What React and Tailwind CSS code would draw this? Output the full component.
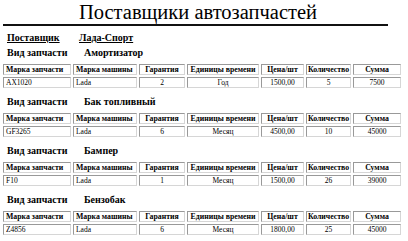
const parts = [
  { kind: "Амортизатор", code: "AX1020", car: "Lada", warranty: "2", unit: "Год", price: "1500,00", qty: "5", sum: "7500" },
  { kind: "Бак топливный", code: "GF3265", car: "Lada", warranty: "6", unit: "Месяц", price: "4500,00", qty: "10", sum: "45000" },
  { kind: "Бампер", code: "F10", car: "Lada", warranty: "1", unit: "Месяц", price: "1500,00", qty: "26", sum: "39000" },
  { kind: "Бензобак", code: "Z4856", car: "Lada", warranty: "6", unit: "Месяц", price: "1800,00", qty: "25", sum: "45000" },
];

const cols = ["Марка запчасти", "Марка машины", "Гарантия", "Единицы времени", "Цена/шт", "Количество", "Сумма"];

const cell = "h-[11px] flex items-center px-[2px] border border-t-[#999] border-l-[#999] border-b-[#d6d6d6] border-r-[#d6d6d6] leading-none whitespace-nowrap overflow-hidden";

function PartTable({ p }) {
  const values = [p.code, p.car, p.warranty, p.unit, p.price, p.qty, p.sum];
  return (
    <div className="grid grid-cols-[68px_64px_46px_72px_43px_45px_48px] gap-[2px] ml-[3px] text-[7.5px]">
      {cols.map((c, i) => (
        <div key={c} className={`${cell} font-bold text-[7.8px] ${i < 2 ? "justify-start" : "justify-center"}`}>{c}</div>
      ))}
      {values.map((v, i) => (
        <div key={i} className={`${cell} ${i < 2 ? "justify-start" : "justify-center"}`}>{v}</div>
      ))}
    </div>
  );
}

export default function App() {
  return (
    <div className="w-[408px] h-[241px] overflow-hidden bg-white text-black font-['Liberation_Serif','Times_New_Roman',serif]">
      <h1 className="h-[24px] text-center text-[20.5px] leading-[25px] pr-[12px]">Поставщики автозапчастей</h1>
      <div className="ml-[3px] w-[385px] h-[2px] bg-[#111]" />
      <div className="mt-[5px] h-[12px] flex items-center font-bold text-[10px] underline">
        <span className="ml-[7px] w-[72px]">Поставщик</span>
        <span>Лада-Спорт</span>
      </div>
      <div className="mt-[3px] flex flex-col gap-[7px]">
        {parts.map(p => (
          <div key={p.code}>
            <div className="h-[12px] mb-[6px] flex items-center font-bold text-[10px]">
              <span className="ml-[7px] w-[77px]">Вид запчасти</span>
              <span>{p.kind}</span>
            </div>
            <PartTable p={p} />
          </div>
        ))}
      </div>
    </div>
  );
}
